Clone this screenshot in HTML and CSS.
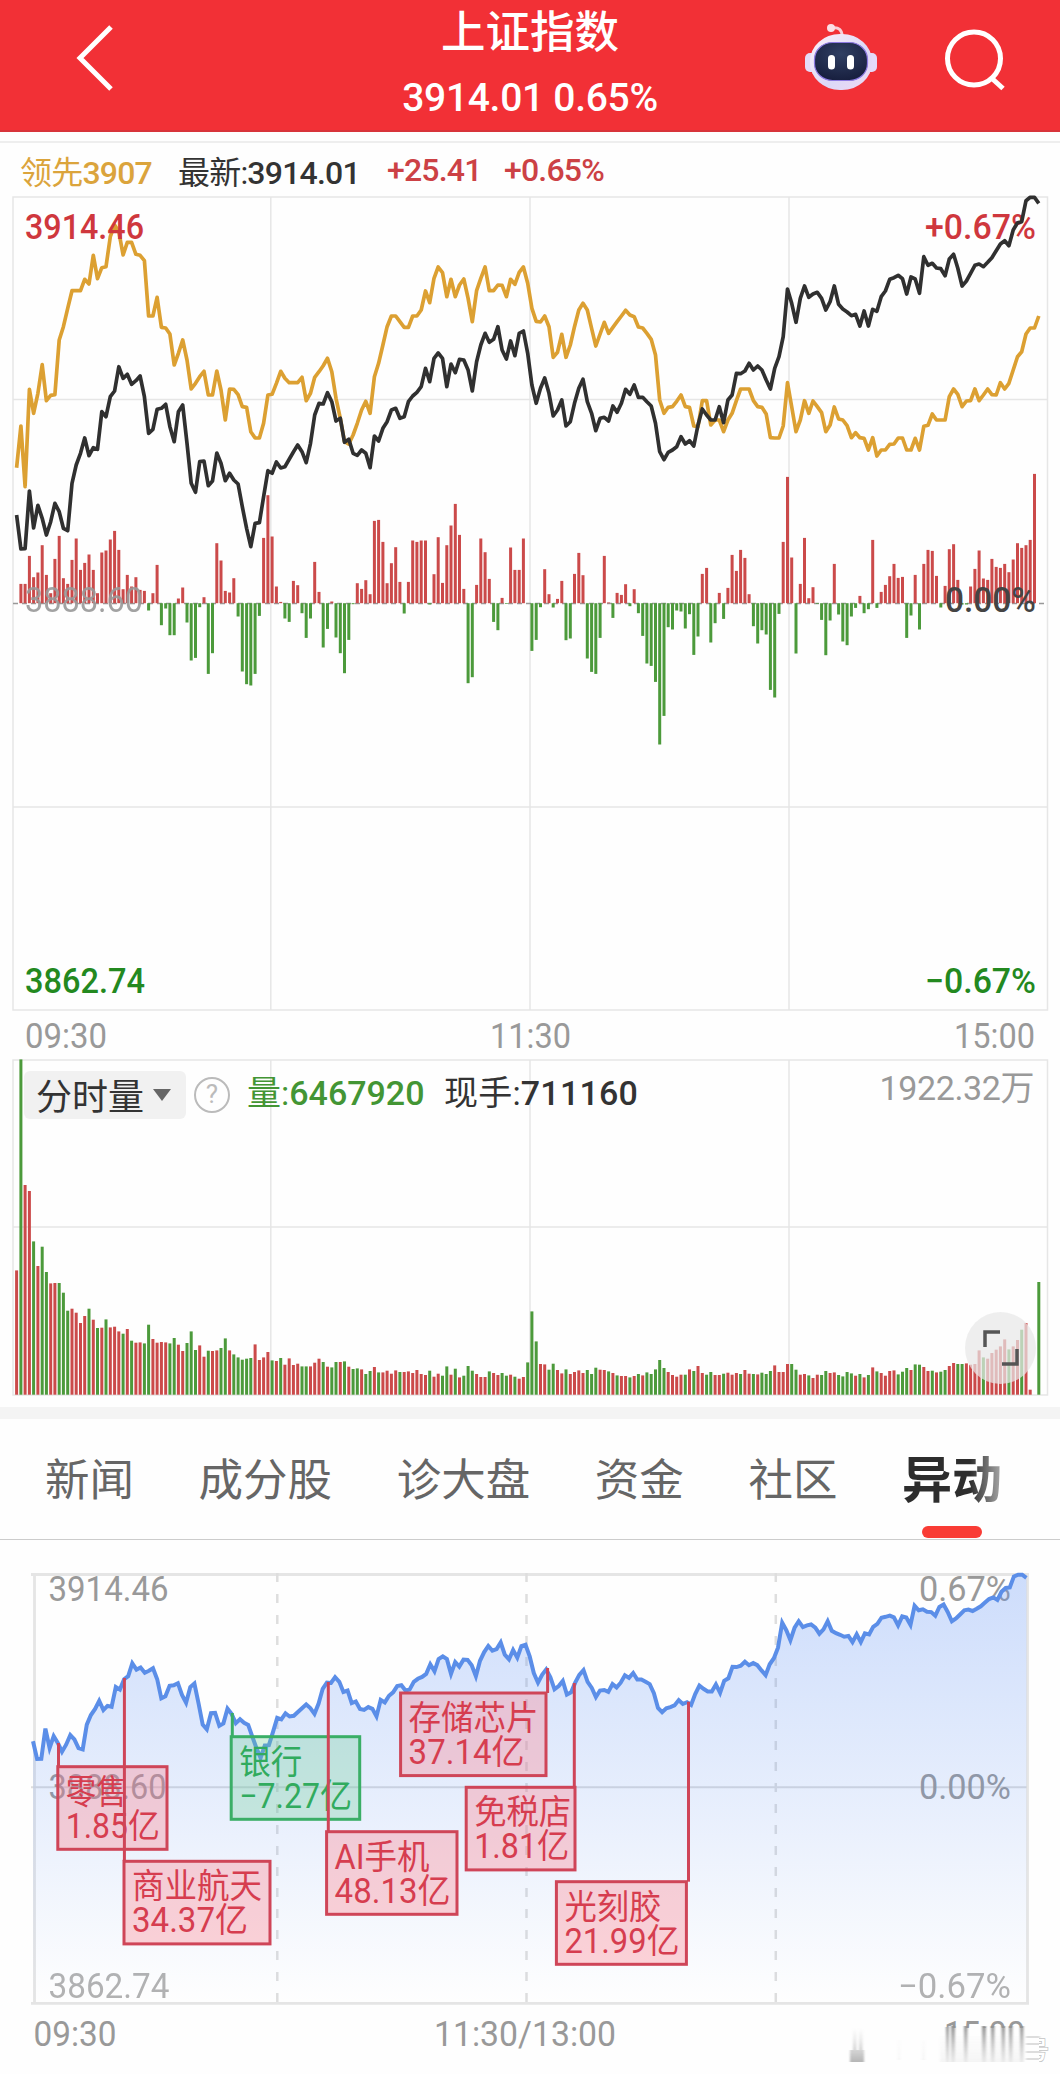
FILE: index.html
```html
<!DOCTYPE html>
<html lang="zh-CN">
<head>
  <meta charset="UTF-8" />
  <meta name="viewport" content="width=device-width, initial-scale=1" />
  <title>上证指数</title>
  <link rel="stylesheet" href="styles.css">
</head>
<body>
  <header class="topbar">
    <svg class="back" viewBox="0 0 50 80" width="50" height="80"><path d="M42 10 L11 41 L42 72" /></svg>
    <div class="topbar-title">
      <h1>上证指数</h1>
      <p>3914.01 0.65%</p>
    </div>
    <svg class="robot" viewBox="0 0 80 80" width="80" height="80">
      <defs>
        <radialGradient id="screen" cx="50%" cy="30%" r="75%">
          <stop offset="0" stop-color="#303f63" />
          <stop offset="1" stop-color="#161d3c" />
        </radialGradient>
        <linearGradient id="shell" x1="0" y1="0" x2="1" y2="1">
          <stop offset="0" stop-color="#fdf1f8" />
          <stop offset=".6" stop-color="#dcd8f8" />
          <stop offset="1" stop-color="#efd9f2" />
        </linearGradient>
      </defs>
      <path d="M42 23 C42 17 39 14 32 15" fill="none" stroke="#f8cfd8" stroke-width="3" stroke-linecap="round" />
      <circle cx="31" cy="15" r="4" fill="#fbdfe6" />
      <rect x="5" y="40" width="12" height="19" rx="5" fill="#e4daf8" />
      <rect x="65" y="40" width="12" height="19" rx="5" fill="#e4daf8" />
      <rect x="10" y="21" width="62" height="56" rx="30" ry="27" fill="url(#shell)" />
      <rect x="14.500" y="29.500" width="53" height="38" rx="18" ry="17" fill="url(#screen)" stroke="#8b78e0" stroke-width="1.200" />
      <rect x="28" y="42" width="7" height="14.500" rx="3.500" fill="#fff" />
      <rect x="47" y="42" width="7" height="14.500" rx="3.500" fill="#fff" />
    </svg>
    <svg class="search" viewBox="0 0 70 70" width="70" height="70">
      <circle cx="33" cy="34.500" r="26.500" />
      <path d="M50.500 54 L62 64.500" />
    </svg>
  </header>

  <div class="quote">
    <span class="lead">领先<b>3907</b></span>
    <span class="last">最新:<b>3914.01</b></span>
    <span class="chg"><b>+25.41</b></span>
    <span class="pct"><b>+0.65%</b></span>
  </div>

  <svg class="chart" id="priceChart" width="1060" height="864" viewBox="0 0 1060 864"></svg>

  <section class="volume">
    <svg class="chart" id="volumeChart" width="1060" height="353" viewBox="0 0 1060 353"></svg>
    <div class="volume-head">
      <button class="picker" type="button">分时量<i></i></button>
      <span class="help">?</span>
      <span class="vol">量:<b>6467920</b></span>
      <span class="hand">现手:<b>711160</b></span>
      <span class="max">1922.32万</span>
    </div>
    <div class="expand">
      <svg viewBox="0 0 36 36" width="36" height="36"><path d="M2 17 V2 H17 M34 19 V34 H19" /></svg>
    </div>
  </section>

  <nav class="tabs">
    <a>新闻</a>
    <a>成分股</a>
    <a>诊大盘</a>
    <a>资金</a>
    <a>社区</a>
    <a class="active">异动</a>
  </nav>

  <svg class="chart moves" id="moveChart" width="1060" height="514" viewBox="0 0 1060 514"></svg>

  <script src="app.js"></script>
</body>
</html>
```
FILE: styles.css
```css
* {
  box-sizing: border-box;
}

body {
  margin: 0;
  width: 1060px;
  height: 2074px;
  overflow: hidden;
  background: #fefefe;
  color: #333;
  font-family: Roboto, "Noto Sans CJK SC", sans-serif;
}

b {
  font-weight: 500;
}

/* Red title bar */
.topbar {
  display: flex;
  align-items: flex-start;
  height: 132px;
  padding-top: 17px;
  background: #f23036;
  border-bottom: 2px solid #d8343a;
}

.topbar svg {
  flex: none;
}

.back {
  margin-left: 69px;
}

.back path,
.search path,
.search circle {
  fill: none;
  stroke: #fff;
  stroke-width: 5;
}

.topbar-title {
  width: 822px;
  margin: -14px -142px 0 0;
  text-align: center;
  color: #fff;
}

.topbar-title h1 {
  margin: 0;
  font-size: 44.500px;
  line-height: 60px;
  font-weight: 500;
}

.topbar-title p {
  margin: 13px 0 0;
  font-size: 39px;
  line-height: 44px;
  letter-spacing: -0.3px;
  font-weight: 500;
  white-space: pre;
}

.robot {
  margin: -4px 0 0 1px;
}

.search {
  margin: 7px 0 0 61px;
}

/* Quote line */
.quote {
  display: flex;
  align-items: center;
  height: 49px;
  margin-top: 9px;
  padding: 7px 0 0 20px;
  border-top: 2px solid #eee;
  font-size: 32px;
  letter-spacing: -0.8px;
  white-space: nowrap;
}

.quote span {
  flex: none;
}

.lead {
  width: 158px;
  color: #dba43c;
}

.last {
  width: 209px;
}

.chg {
  width: 117px;
}

.chg,
.pct {
  color: #cc4145;
}

.chart {
  display: block;
  font-size: 34.500px;
}

.chart text {
  font-weight: 500;
}

.grid {
  stroke: #e6e6e6;
  stroke-width: 1.500;
  fill: none;
}

.up {
  fill: #cb4a4a;
}

.down {
  fill: #4c9a3b;
}

.t-up {
  fill: #cf373d;
}

.t-down {
  fill: #23891f;
}

.chart .t-gray {
  fill: #999;
  font-weight: 400;
}

.t-dark {
  fill: #444;
}

/* Volume */
.volume {
  position: relative;
  border-bottom: 12px solid #f4f4f4;
}

.volume-head {
  position: absolute;
  left: 24px;
  top: 17px;
  right: 26px;
  display: flex;
  align-items: center;
  height: 48px;
  font-size: 34px;
  line-height: 44px;
  white-space: nowrap;
}

.picker {
  display: flex;
  align-items: center;
  width: 162px;
  height: 48px;
  padding: 0 0 3px 12px;
  border: 0;
  border-radius: 6px;
  background: #f1f1f1;
  color: #333;
  font-family: inherit;
  font-size: 36px;
}

.picker i {
  margin: 3px 0 0 9px;
  border: 9px solid transparent;
  border-top: 12px solid #666;
  border-bottom: 0;
}

.help {
  width: 36px;
  height: 36px;
  margin-left: 8px;
  border: 2.500px solid #bbb;
  border-radius: 50%;
  color: #bbb;
  font-size: 26px;
  line-height: 31px;
  text-align: center;
}

.vol {
  width: 197px;
  margin: -4px 0 0 17px;
  color: #439534;
}

.hand {
  margin-top: -4px;
  letter-spacing: 0.2px;
}

.max {
  margin: -15px 0 0 auto;
  color: #999;
  letter-spacing: -0.4px;
}

.expand {
  position: absolute;
  left: 965px;
  top: 258px;
  width: 71px;
  height: 72px;
  padding: 18px;
  border-radius: 50%;
  background: rgba(232, 232, 232, 0.72);
}

.expand path {
  fill: none;
  stroke: #555;
  stroke-width: 3.500;
}

/* Tabs */
.tabs {
  display: flex;
  justify-content: space-between;
  height: 121px;
  padding: 0 58px 0 45px;
  border-bottom: 1.500px solid #ccc;
  font-size: 44.500px;
  line-height: 124px;
  color: #666;
}

.tabs .active {
  position: relative;
  height: 119px;
  font-size: 50px;
  font-weight: 700;
  color: transparent;
  background: linear-gradient(90deg, #2d2d2d 68%, #aaa);
  -webkit-background-clip: text;
  background-clip: text;
}

.tabs .active::after {
  content: "";
  position: absolute;
  left: 20px;
  bottom: 0;
  width: 60px;
  height: 12px;
  border-radius: 6px;
  background: #f93c35;
}

/* Sector moves */
.moves {
  margin-top: 20px;
}

.m-up {
  fill: #d63d4f;
  stroke: #cf4558;
}

.m-down {
  fill: #31ab5e;
  stroke: #3aae66;
}

.m-up rect {
  fill: rgba(255, 120, 135, 0.32);
}

.m-down rect {
  fill: rgba(110, 205, 150, 0.3);
}

.m-up rect,
.m-down rect,
.m-up line,
.m-down line {
  stroke-width: 3;
}

.chart .m-up text,
.chart .m-down text {
  stroke: none;
  font-weight: 400;
}

.stamp {
  fill: #fff;
  stroke: #c4c4c4;
  stroke-width: 1.500;
  paint-order: stroke;
  font-size: 25px;
}
```
FILE: app.js
```js
// One value per trading minute, y in thirds of a pixel
const price = [
  975,1077,1076,903,1014,946,985,1035,995,940,965,1015,1022,880,825,790,744,797,773,778,
  665,680,620,603,530,565,553,583,572,558,620,730,718,658,655,643,710,755,665,645,
  760,880,907,815,813,887,873,789,820,872,850,870,882,950,1015,1070,1000,998,920,842,
  850,816,834,830,808,786,765,785,818,760,675,640,642,608,635,693,685,757,748,790,
  796,780,790,833,738,753,715,695,660,655,685,680,635,618,607,590,535,575,505,489,
  505,590,522,548,508,510,540,603,515,465,430,457,448,410,480,507,453,497,430,423,
  490,585,640,595,564,610,678,660,630,708,695,640,595,568,635,670,722,685,682,693,
  648,667,640,598,613,585,622,622,635,648,700,785,809,787,780,770,740,762,752,768,
  705,657,675,690,690,650,698,630,615,550,551,543,520,540,528,540,570,597,535,500,
  440,297,340,397,325,288,322,312,307,325,360,335,288,343,357,366,377,373,408,363,
  408,358,364,320,303,268,263,256,266,312,261,267,310,200,226,220,234,236,257,207,
  193,235,288,273,250,226,222,230,217,203,182,162,152,167,120,98,95,32,22,22,40
];

const lead = [
  833,708,890,598,670,610,524,632,616,614,450,410,355,302,302,302,268,282,196,266,
  233,230,140,105,125,195,157,157,193,196,212,378,378,322,412,414,432,525,490,450,
  510,597,580,560,544,615,615,543,600,690,597,598,614,650,652,725,744,744,700,615,
  613,580,544,565,578,578,578,562,632,610,562,545,527,505,545,625,685,755,762,735,
  700,660,634,670,560,520,465,410,378,378,395,412,412,378,378,360,303,338,265,231,
  248,320,268,320,285,267,325,395,302,265,231,302,302,285,286,320,268,283,247,231,
  280,355,394,396,378,410,502,487,433,502,465,410,360,340,360,415,468,432,397,430,
  412,395,378,361,375,380,411,414,430,448,495,630,670,652,650,634,615,650,652,708,
  710,632,632,705,690,690,725,690,670,632,597,597,597,632,650,652,672,743,744,744,
  708,578,650,725,690,632,670,633,650,668,725,705,651,687,690,707,743,728,743,745,
  780,743,798,780,780,763,762,744,744,780,780,745,780,709,706,672,690,690,690,620,
  597,613,650,633,632,597,632,615,597,614,615,578,597,580,540,500,485,432,414,414,378
];

const momentum = [
  0,58,58,142,78,92,174,85,30,133,202,75,58,130,194,100,121,146,100,30,
  152,158,191,217,160,42,85,50,78,40,37,-22,30,115,-66,-16,-96,-96,14,47,
  -58,-172,-164,-12,18,-212,-150,180,128,37,32,75,-40,-205,-243,-247,-212,-38,196,324,
  200,50,4,-46,-56,67,54,-30,-104,-46,124,34,-133,-77,5,-103,-150,-210,-110,-3,
  60,43,69,27,247,250,184,60,120,168,64,-31,64,188,184,188,188,-4,87,198,
  61,174,233,298,205,43,-240,-222,55,194,153,73,-56,-81,16,-2,167,100,100,194,
  0,-143,-110,-12,102,27,-13,13,67,-111,-106,88,151,84,-166,-206,-212,-104,142,2,
  -44,31,25,57,-9,42,-30,-98,-181,-188,-236,-424,-338,-72,-79,-22,-25,-76,-33,-155,
  -100,88,106,-118,-60,31,-47,46,145,97,160,136,27,-69,-121,-81,-94,-260,-283,-32,
  184,379,137,-151,58,196,15,48,-2,-50,-156,-52,118,-34,-115,-126,-40,-14,22,-30,
  -18,190,-14,34,55,81,118,76,79,-104,-37,85,-79,118,160,157,82,-13,52,162,
  177,70,-4,-4,50,103,158,74,70,133,109,106,118,93,131,180,166,174,190,388,0
];

// Negative = falling minute (green)
const volume = [
  373,-1006,629,611,-460,386,-444,-368,334,335,-335,-306,-252,258,246,215,236,-258,225,-200,
  201,-226,202,204,190,-183,197,-162,156,157,-154,-210,167,156,158,157,-154,-170,150,131,
  -155,-190,-134,148,114,-132,131,133,-140,-169,133,-121,-112,-105,-108,-110,151,104,112,128,
  -103,101,-110,90,109,89,93,-85,-85,85,96,108,-98,84,-82,-98,98,-100,84,-77,
  -79,76,-62,-71,83,-67,67,72,63,73,-68,68,70,65,74,62,59,-72,54,63,
  -57,-85,60,-78,52,-57,-86,-72,62,53,53,-70,65,59,-65,-57,60,-54,48,53,
  -97,-250,-160,92,91,-75,-93,74,64,-76,62,68,73,65,-74,-62,-81,75,74,-70,
  65,-58,56,56,-52,56,-62,58,-67,-62,-76,-104,-80,68,59,54,60,-60,76,-71,
  86,65,-60,-68,59,59,-63,66,60,65,-62,74,63,-62,61,-66,-62,-71,88,68,
  68,92,-92,-75,60,62,-58,50,60,-59,-71,65,67,-59,-55,-68,-64,57,-62,52,
  -59,82,-70,65,57,71,73,-61,-69,-80,74,-91,-90,83,71,-72,67,-69,-74,86,
  95,-92,-92,94,90,92,133,-112,108,125,135,145,166,-136,145,164,-195,215,15,0,-338
];

// name, amount, box x/y/width, stem x/top, text widths
const moves = [
  ["零售", "1.85亿", 57.8, 206.7, 109.2, 58.5, 183, 61, 94],
  ["商业航天", "34.37亿", 124, 301.3, 146, 124.4, 118, 130, 116],
  ["银行", "−7.27亿", 231.2, 176.7, 128.5, 232.3, 153, 63, 113],
  ["AI手机", "48.13亿", 326.6, 271.7, 130.4, 328.3, 122, 95, 116],
  ["存储芯片", "37.14亿", 400.6, 133, 145.4, 547.6, 108, 130, 116],
  ["免税店", "1.81亿", 466.2, 227.3, 108.8, 574.3, 123, 97, 95],
  ["光刻胶", "21.99亿", 556.4, 321.7, 130, 688.5, 141.7, 97, 115]
];

const X0 = 16.6;
const STEP = 4.259;
const xAt = i => X0 + i * STEP;

function label(text, x, y, width, cls) {
  return `<text x="${x}" y="${y}" textLength="${width}" lengthAdjust="spacingAndGlyphs" class="${cls}">${text}</text>`;
}

function line(values, color) {
  const pts = values.map((v, i) => `${xAt(i).toFixed(1)},${(v / 3).toFixed(1)}`).join(" ");
  return `<polyline points="${pts}" fill="none" stroke="${color}" stroke-width="3.7" stroke-linejoin="round" />`;
}

function bars(values, base, signed) {
  return values.map((v, i) => {
    const h = Math.abs(v) / 3;
    const y = signed && v < 0 ? base : base - h;
    return `<rect class="${v < 0 ? "down" : "up"}" x="${(xAt(i) - 1.5).toFixed(1)}" y="${y.toFixed(1)}" width="3" height="${h.toFixed(1)}" />`;
  }).join("");
}

function drawPrice() {
  document.getElementById("priceChart").innerHTML = `
    <path class="grid" d="M13 7H1047.500V820H13Z M13 209.500H1047.500 M13 617H1047.500 M270.800 7V820 M530 7V820 M789 7V820" />
    <path d="M13 413.500H1047" stroke="#999" stroke-width="1.500" stroke-dasharray="5 4" />
    ${line(lead, "#dca032")}
    ${label("3914.46", 25, 48.5, 119, "t-up")}
    ${label("+0.67%", 925, 48.5, 111, "t-up")}
    ${bars(momentum, 413.2, true)}
    ${line(price, "#303030")}
    <g opacity=".9">${label("3888.60", 25, 421.5, 118, "t-gray")}</g>
    ${label("0.00%", 945, 421.5, 91, "t-dark")}
    ${label("3862.74", 25, 802.5, 120, "t-down")}
    ${label("−0.67%", 925, 802.5, 111, "t-down")}
    ${label("09:30", 25, 857.5, 82, "t-gray")}
    ${label("11:30", 490, 857.5, 81, "t-gray")}
    ${label("15:00", 954, 857.5, 81, "t-gray")}
  `;
}

function drawVolume() {
  document.getElementById("volumeChart").innerHTML = `
    <path class="grid" d="M13 6H1047.500V341H13Z M13 173H1047.500 M270.800 6V341 M530 6V341 M789 6V341" />
    ${bars(volume, 340.7, false)}
  `;
}

function drawMoves() {
  const pts = price.map((v, i) =>
    `${(33 + i * 4.139).toFixed(1)},${(227.3 + (v - 1239) * 0.1747).toFixed(1)}`).join(" ");

  const boxes = moves.map(([name, amount, x, y, w, sx, sy, nw, aw]) => `
    <g class="${amount[0] === "−" ? "m-down" : "m-up"}">
      <line x1="${sx}" y1="${sy}" x2="${sx}" y2="${y}" />
      <rect x="${x}" y="${y}" width="${w}" height="82.600" />
      ${label(name, x + 8, y + 37, nw, "m-name")}
      ${label(amount, x + 8, y + 71, aw, "m-amount")}
    </g>`).join("");

  document.getElementById("moveChart").innerHTML = `
    <defs>
      <linearGradient id="area" x1="0" y1="14" x2="0" y2="443" gradientUnits="userSpaceOnUse">
        <stop offset="0" stop-color="#5b8ff5" stop-opacity=".3" />
        <stop offset=".5" stop-color="#5b8ff5" stop-opacity=".15" />
        <stop offset="1" stop-color="#5b8ff5" stop-opacity="0" />
      </linearGradient>
      <linearGradient id="smear" x1="0" y1="466" x2="0" y2="503" gradientUnits="userSpaceOnUse">
        <stop offset="0" stop-color="#8f8f8f" stop-opacity=".95" />
        <stop offset="1" stop-color="#aaa" stop-opacity=".12" />
      </linearGradient>
      <linearGradient id="haze" x1="0" y1="468" x2="0" y2="503" gradientUnits="userSpaceOnUse">
        <stop offset="0" stop-color="#bbb" stop-opacity="0" />
        <stop offset="1" stop-color="#999" stop-opacity=".75" />
      </linearGradient>
      <filter id="soft"><feGaussianBlur stdDeviation="0.800 0.400" /></filter>
      <clipPath id="timeTop"><rect x="940" y="450" width="100" height="18" /></clipPath>
      <clipPath id="stampEnd"><rect x="1039" y="470" width="14" height="40" /></clipPath>
    </defs>
    <path d="M31 14.500H1029 M31 443.300H1029 M34.500 14V443 M1027.500 14V443" stroke="#e5e5e5" stroke-width="2.800" />
    <path d="M31 227.300H1027" stroke="#ddd" stroke-width="2" />
    <path d="M277.300 13V443 M526.500 13V443 M775.800 13V443" stroke="#dedede" stroke-width="2.500" stroke-dasharray="9 12" />
    ${label("3914.46", 48.5, 41.3, 120, "t-gray")}
    ${label("3888.60", 48.5, 239.3, 118, "t-gray")}
    <g opacity=".75">${label("3862.74", 48.5, 437.5, 121, "t-gray")}${label("−0.67%", 898, 437.5, 113, "t-gray")}</g>
    ${label("0.67%", 919, 41.3, 92, "t-gray")}
    ${label("0.00%", 919, 239.3, 92, "t-gray")}
    <polygon points="33,443 ${pts} 1026.400,443" fill="url(#area)" />
    <polyline points="${pts}" fill="none" stroke="#5b8ee8" stroke-width="4" />
    ${boxes}
    ${label("09:30", 33.5, 486, 83, "t-gray")}
    ${label("11:30/13:00", 434, 486, 182, "t-gray")}
    <g clip-path="url(#timeTop)">${label("15:00", 944, 486, 81, "t-gray")}</g>
    <g filter="url(#soft)">
      <path d="M946 467h3v35h-3z M951 466h4v36h-4z M964 466h3.500v36h-3.500z M982 466h4v36h-4z M991 466h3.500v36h-3.500z M1001.500 466h3.500v36h-3.500z M1009 466h3.500v36h-3.500z M1020 466h3.500v36h-3.500z" fill="url(#smear)" />
      <path d="M853 468h3.500v34h-3.500z M859 468h3.500v34h-3.500z M850 490h14v12h-14z" fill="url(#haze)" />
      <path d="M898 480h2v20h-2z M922 480h3v20h-3z M940 476h84v26h-84z" fill="url(#haze)" opacity=".12" />
      <path d="M1026 477h14 M1026 484h15 M1026 492h15 M1026 499h14" stroke="#ddd" stroke-width="2" />
    </g>
    <g clip-path="url(#stampEnd)"><text x="1024" y="499" class="stamp">号</text></g>
  `;
}

drawPrice();
drawVolume();
drawMoves();
```
